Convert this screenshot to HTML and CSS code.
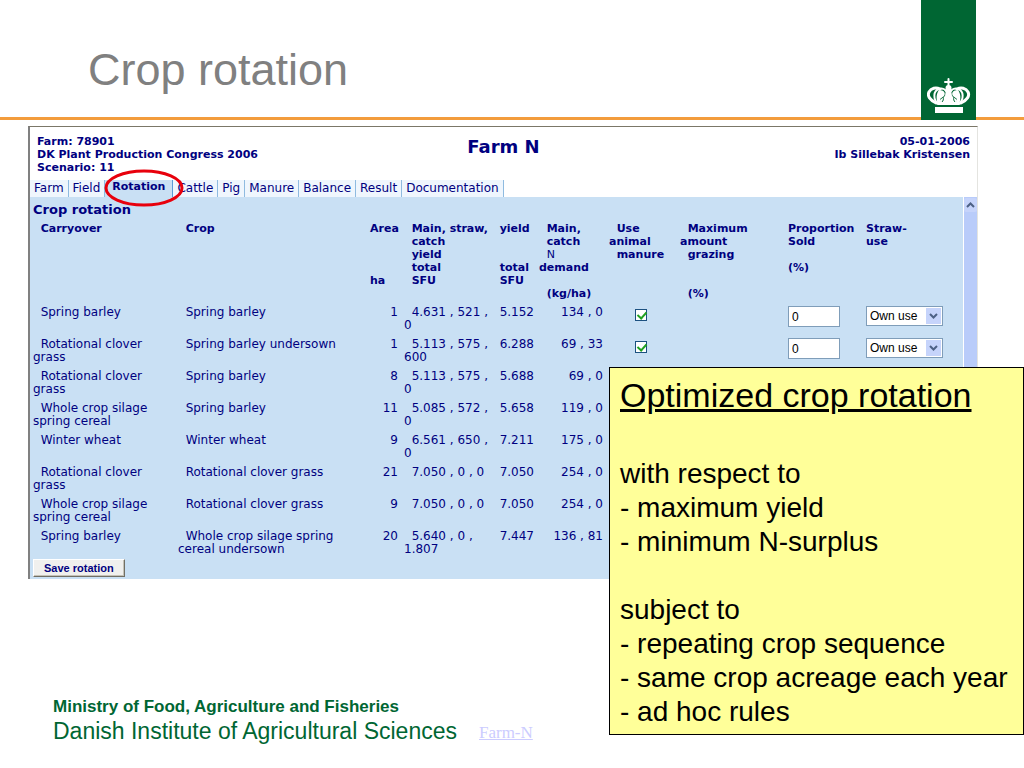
FILE: index.html
```html
<!DOCTYPE html>
<html lang="en">
<head>
    <meta charset="UTF-8">
    <meta name="viewport" content="width=device-width, initial-scale=1.0">
    <title>Crop rotation</title>
    <link rel="stylesheet" href="styles.css">
</head>
<body>
    <header class="slide-header">
        <h1>Crop rotation</h1>
        <div class="banner">
            <svg width="44" height="37" viewBox="0 0 44 37" aria-hidden="true">
                <g fill="none" stroke="#fff" stroke-linecap="round">
                    <path d="M9 25C3 22 0 18 2 14C4 10 9 9 13 11" stroke-width="3"/>
                    <path d="M34 25C40 22 43 18 41 14C39 10 34 9 30 11" stroke-width="3"/>
                    <path d="M11 26C6 21 6 13 12 11C15 10 18 11 19 13" stroke-width="2"/>
                    <path d="M32 26C37 21 37 13 31 11C28 10 25 11 24 13" stroke-width="2"/>
                    <path d="M21.500 1V8M18 4H25" stroke-width="2"/>
                </g>
                <g fill="#fff">
                    <circle cx="21.500" cy="10" r="3"/>
                    <path d="M19 11H24L25 18L30 22L29 27H14L13 22L18 18Z"/>
                    <path d="M12 12C17 12 19 15 17 18L13 21L15 27H11C9 21 9 16 12 12Z"/>
                    <path d="M31 12C26 12 24 15 26 18L30 21L28 27H32C34 21 34 16 31 12Z"/>
                    <rect x="8" y="29" width="28" height="6"/>
                </g>
                <path d="M16 19C17 21 16 23 15 24M27 19C26 21 27 23 28 24" fill="none" stroke="#006633"/>
            </svg>
        </div>
    </header>

    <main class="app">
        <div class="app-head">
            <p>Farm: 78901<br>DK Plant Production Congress 2006<br>Scenario: 11</p>
            <h2>Farm N</h2>
            <p class="right">05-01-2006<br>Ib Sillebak Kristensen</p>
        </div>

        <nav class="tabs">
            <a href="#">Farm</a>
            <a href="#">Field</a>
            <a href="#" class="active">Rotation
                <svg class="ring" width="80" height="38" viewBox="0 0 80 38" aria-hidden="true"><ellipse cx="40" cy="19" rx="38" ry="17" fill="none" stroke="#e8000c" stroke-width="3"/></svg>
            </a>
            <a href="#">Cattle</a>
            <a href="#">Pig</a>
            <a href="#">Manure</a>
            <a href="#">Balance</a>
            <a href="#">Result</a>
            <a href="#">Documentation</a>
        </nav>

        <div class="panel">
            <form class="content">
                <h3>Crop rotation</h3>
                <table>
                    <colgroup>
                        <col class="c-carry"><col class="c-crop"><col class="c-area"><col class="c-main"><col class="c-yield">
                        <col class="c-demand"><col class="c-manure"><col class="c-graze"><col class="c-sold"><col>
                    </colgroup>
                    <thead>
                        <tr>
                            <th>&nbsp;&nbsp;Carryover</th>
                            <th>&nbsp;&nbsp;Crop</th>
                            <th>Area<br><br><br><br>ha</th>
                            <th>&nbsp;&nbsp;Main, straw,<br>&nbsp;&nbsp;catch<br>&nbsp;&nbsp;yield<br>&nbsp;&nbsp;total<br>&nbsp;&nbsp;SFU</th>
                            <th>&nbsp;&nbsp;yield<br><br><br>&nbsp;&nbsp;total<br>&nbsp;&nbsp;SFU</th>
                            <th>&nbsp;&nbsp;Main,<br>&nbsp;&nbsp;catch<br>&nbsp;&nbsp;<span class="light">N</span><br>demand<br><br>&nbsp;&nbsp;(kg/ha)</th>
                            <th>&nbsp;&nbsp;Use<br>animal<br>&nbsp;&nbsp;manure</th>
                            <th>&nbsp;&nbsp;Maximum<br>amount<br>&nbsp;&nbsp;grazing<br><br><br>&nbsp;&nbsp;(%)</th>
                            <th>Proportion<br>Sold<br><br>(%)</th>
                            <th>Straw-<br>use</th>
                        </tr>
                    </thead>
                    <tbody>
                        <tr>
                            <td>&nbsp;&nbsp;Spring barley</td>
                            <td>&nbsp;&nbsp;Spring barley</td>
                            <td class="num">1</td>
                            <td>&nbsp;&nbsp;4.631 , 521 ,<br>0</td>
                            <td>&nbsp;&nbsp;5.152</td>
                            <td class="num">134 , 0</td>
                            <td><input type="checkbox" aria-label="Use animal manure, row 1" checked></td>
                            <td></td>
                            <td><input type="text" aria-label="Proportion sold, row 1" value="0"></td>
                            <td><span class="drop"><select aria-label="Straw-use, row 1"><option>Own use</option></select><svg width="15" height="16" viewBox="0 0 15 16" aria-hidden="true"><path d="M4 6L7.500 9.500L11 6" fill="none" stroke="#4d6185" stroke-width="2"/></svg></span></td>
                        </tr>
                        <tr>
                            <td>&nbsp;&nbsp;Rotational clover<br>grass</td>
                            <td>&nbsp;&nbsp;Spring barley undersown</td>
                            <td class="num">1</td>
                            <td>&nbsp;&nbsp;5.113 , 575 ,<br>600</td>
                            <td>&nbsp;&nbsp;6.288</td>
                            <td class="num">69 , 33</td>
                            <td><input type="checkbox" aria-label="Use animal manure, row 2" checked></td>
                            <td></td>
                            <td><input type="text" aria-label="Proportion sold, row 2" value="0"></td>
                            <td><span class="drop"><select aria-label="Straw-use, row 2"><option>Own use</option></select><svg width="15" height="16" viewBox="0 0 15 16" aria-hidden="true"><path d="M4 6L7.500 9.500L11 6" fill="none" stroke="#4d6185" stroke-width="2"/></svg></span></td>
                        </tr>
                        <tr>
                            <td>&nbsp;&nbsp;Rotational clover<br>grass</td>
                            <td>&nbsp;&nbsp;Spring barley</td>
                            <td class="num">8</td>
                            <td>&nbsp;&nbsp;5.113 , 575 ,<br>0</td>
                            <td>&nbsp;&nbsp;5.688</td>
                            <td class="num">69 , 0</td>
                            <td></td><td></td><td></td><td></td>
                        </tr>
                        <tr>
                            <td>&nbsp;&nbsp;Whole crop silage<br>spring cereal</td>
                            <td>&nbsp;&nbsp;Spring barley</td>
                            <td class="num">11</td>
                            <td>&nbsp;&nbsp;5.085 , 572 ,<br>0</td>
                            <td>&nbsp;&nbsp;5.658</td>
                            <td class="num">119 , 0</td>
                            <td></td><td></td><td></td><td></td>
                        </tr>
                        <tr>
                            <td>&nbsp;&nbsp;Winter wheat</td>
                            <td>&nbsp;&nbsp;Winter wheat</td>
                            <td class="num">9</td>
                            <td>&nbsp;&nbsp;6.561 , 650 ,<br>0</td>
                            <td>&nbsp;&nbsp;7.211</td>
                            <td class="num">175 , 0</td>
                            <td></td><td></td><td></td><td></td>
                        </tr>
                        <tr>
                            <td>&nbsp;&nbsp;Rotational clover<br>grass</td>
                            <td>&nbsp;&nbsp;Rotational clover grass</td>
                            <td class="num">21</td>
                            <td>&nbsp;&nbsp;7.050 , 0 , 0</td>
                            <td>&nbsp;&nbsp;7.050</td>
                            <td class="num">254 , 0</td>
                            <td></td><td></td><td></td><td></td>
                        </tr>
                        <tr>
                            <td>&nbsp;&nbsp;Whole crop silage<br>spring cereal</td>
                            <td>&nbsp;&nbsp;Rotational clover grass</td>
                            <td class="num">9</td>
                            <td>&nbsp;&nbsp;7.050 , 0 , 0</td>
                            <td>&nbsp;&nbsp;7.050</td>
                            <td class="num">254 , 0</td>
                            <td></td><td></td><td></td><td></td>
                        </tr>
                        <tr>
                            <td>&nbsp;&nbsp;Spring barley</td>
                            <td>&nbsp;&nbsp;Whole crop silage spring<br>cereal undersown</td>
                            <td class="num">20</td>
                            <td>&nbsp;&nbsp;5.640 , 0 ,<br>1.807</td>
                            <td>&nbsp;&nbsp;7.447</td>
                            <td class="num">136 , 81</td>
                            <td></td><td></td><td></td><td></td>
                        </tr>
                    </tbody>
                </table>
                <button type="button" class="save">Save rotation</button>
            </form>
            <div class="scrollbar">
                <svg width="13" height="14" viewBox="0 0 13 14" aria-hidden="true"><rect width="13" height="14" rx="2" fill="#c6d4fb"/><path d="M3 9L6.500 5.500L10 9" fill="none" stroke="#4d6185" stroke-width="2"/></svg>
            </div>
        </div>
    </main>

    <aside class="note">
        <h2>Optimized crop rotation</h2>
        <p>with respect to<br>- maximum yield<br>- minimum N-surplus</p>
        <p>subject to<br>- repeating crop sequence<br>- same crop acreage each year<br>- ad hoc rules</p>
    </aside>

    <footer>
        <p><strong>Ministry of Food, Agriculture and Fisheries</strong>Danish Institute of Agricultural Sciences</p>
        <a href="#">Farm-N</a>
    </footer>
</body>
</html>
```
FILE: styles.css
```css
* {
    box-sizing: border-box;
}
body {
    font-family: "Liberation Sans", Arial, sans-serif;
    margin: 0;
    background-color: #fff;
    position: relative;
}
h1, h2, h3, p {
    margin: 0;
    font-weight: normal;
}
.slide-header {
    position: relative;
    height: 120px;
    padding: 44px 88px 0;
    border-bottom: 3px solid #f39c3c;
}
h1 {
    font-size: 45px;
    line-height: 52px;
    color: #808080;
}
.banner {
    position: absolute;
    top: 0;
    right: 48px;
    width: 55px;
    height: 120px;
    padding-bottom: 5px;
    background-color: #006633;
    display: flex;
    align-items: flex-end;
    justify-content: center;
}

/* farm application */
.app {
    margin: 6px 46px 0 28px;
    border-top: 1px solid #7b7768;
    border-left: 2px solid #808080;
    border-right: 1px solid #e4e4e0;
    font-family: "DejaVu Sans", Verdana, sans-serif;
    font-size: 12px;
    line-height: 13px;
    color: #000080;
}
.app-head {
    display: grid;
    grid-template-columns: 1fr auto 1fr;
    padding: 8px 7px 0;
    height: 53px;
}
.app-head p {
    font-size: 11px;
    font-weight: bold;
}
.app-head h2 {
    font-size: 18px;
    line-height: 24px;
    font-weight: bold;
}
.right {
    text-align: right;
}
.tabs {
    display: flex;
    height: 17px;
}
.tabs a {
    padding: 2px 4px;
    border-right: 1px solid #8fbbe0;
    background-color: #eff6fd;
    color: #000080;
    text-decoration: none;
}
.tabs .active {
    position: relative;
    padding: 0 7px;
    font-size: 11px;
    font-weight: bold;
    background-color: #c9e0f4;
    border-color: #5b9bd5;
}
.ring {
    position: absolute;
    left: -1px;
    top: -11px;
    z-index: 1;
}
.panel {
    display: flex;
    background-color: #c9e0f4;
}
.content {
    flex: 1;
    padding: 5px 0 2px 3px;
}
h3 {
    font-size: 13px;
    line-height: 15px;
    font-weight: bold;
}
table {
    width: 100%;
    margin-top: 5px;
    table-layout: fixed;
    border-collapse: collapse;
}
.c-carry { width: 145px; }
.c-crop { width: 192px; }
.c-area { width: 34px; }
.c-main { width: 88px; }
.c-yield { width: 47px; }
.c-demand { width: 70px; }
.c-manure { width: 71px; }
.c-graze { width: 108px; }
.c-sold { width: 78px; }
th, td {
    padding: 3px 0;
    text-align: left;
    vertical-align: top;
    white-space: nowrap;
}
th {
    padding: 0 0 3px;
    font-size: 11px;
}
td {
    height: 32px;
}
.light {
    font-weight: normal;
}
.num {
    padding-right: 6px;
    text-align: right;
}
input[type="text"] {
    display: block;
    width: 52px;
    height: 21px;
    padding: 0 3px;
    border: 1px solid #7f9db9;
    font: 12px "Liberation Sans", Arial, sans-serif;
}
input[type="checkbox"] {
    appearance: none;
    display: block;
    width: 12px;
    height: 12px;
    margin: 3px 0 0 26px;
    border: 1px solid #1c5180;
    background-color: #fff;
}
input[type="checkbox"]:checked::after {
    content: "";
    display: block;
    width: 4px;
    height: 7px;
    margin: 0 3px;
    border: solid #21a121;
    border-width: 0 2px 2px 0;
    transform: rotate(42deg);
}
.drop {
    position: relative;
    display: block;
    width: 77px;
}
.drop select {
    appearance: none;
    display: block;
    width: 100%;
    height: 20px;
    padding: 0 3px;
    border: 1px solid #7f9db9;
    border-radius: 0;
    background-color: #fff;
    color: #000;
    font: 12px "Liberation Sans", Arial, sans-serif;
}
.drop svg {
    position: absolute;
    top: 2px;
    right: 2px;
    background-color: #c6d4fb;
    pointer-events: none;
}
.save {
    display: block;
    height: 18px;
    padding: 0 10px;
    border: 1px solid;
    border-color: #fff #716f64 #716f64 #fff;
    box-shadow: inset -1px -1px #c5c2b8;
    background-color: #f0f0ee;
    color: #000080;
    font: bold 11px "Liberation Sans", Arial, sans-serif;
}
.scrollbar {
    width: 14px;
    padding-top: 1px;
    border-left: 1px solid #fff;
    background-color: #b9ccfa;
}

/* yellow comment box laid over the application */
.note {
    position: absolute;
    top: 367px;
    right: 0;
    z-index: 2;
    min-width: 415px;
    padding: 5px 9px 5px 10px;
    border: 1px solid #000;
    background-color: #ffff99;
    color: #000;
    font-size: 28px;
    line-height: 34px;
}
.note h2 {
    margin-bottom: 40px;
    font-size: 34px;
    line-height: 44px;
    text-decoration: underline;
}
.note p + p {
    margin-top: 34px;
}

footer {
    display: flex;
    align-items: baseline;
    gap: 22px;
    margin: 117px 53px 20px;
    color: #006633;
    font-size: 23px;
    line-height: 26px;
}
footer p {
    display: flex;
    flex-direction: column;
}
footer strong {
    font-size: 17px;
    line-height: 22px;
}
footer a {
    align-self: flex-end;
    font-family: "Liberation Serif", "Times New Roman", serif;
    font-size: 17px;
    line-height: 22px;
    color: #ccccff;
}
```
